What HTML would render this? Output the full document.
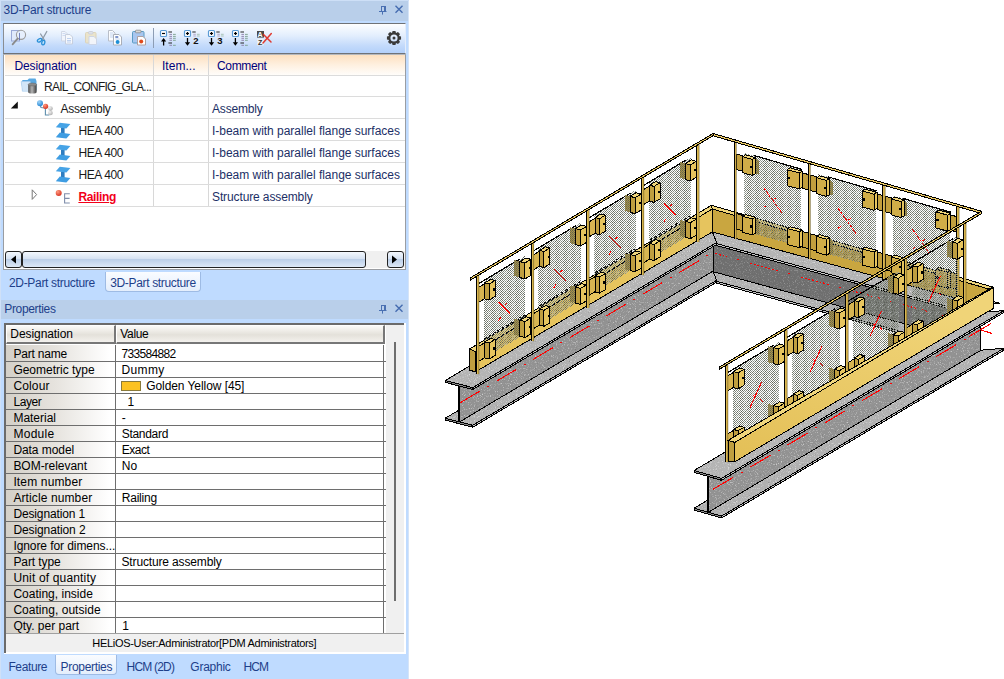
<!DOCTYPE html><html><head><meta charset="utf-8"><title>3D-Part structure</title><style>
*{box-sizing:border-box;margin:0;padding:0}
html,body{width:1004px;height:679px;overflow:hidden;background:#fff}
body{font-family:"Liberation Sans",Arial,sans-serif;font-size:12px;color:#000;position:relative}
.a{position:absolute}
.t{position:absolute;white-space:nowrap;line-height:16px;height:16px}
#left{position:absolute;left:0;top:0;width:409px;height:679px;background:#bfdbff}
.title{position:absolute;left:1px;width:407px;background:#b9cfea}
.nv{color:#00007b}
.bl{color:#1e3f8a}
.cm{color:#1c2f66}
.dk{color:#1a1a1a}
.hl{font-size:11px}
.rl{color:#f2001a;font-weight:bold;text-decoration:underline}
</style></head><body><div id="left"><div class="a" style="left:0;top:0;width:1px;height:679px;background:#cfe0f7"></div><div class="a" style="left:408px;top:0;width:1px;height:679px;background:#d5e4f8"></div><div class="title" style="top:0;height:21px"></div><div class="a" style="left:0;top:0;width:409px;height:1px;background:#cddff6"></div><span class="t bl" style="left:3.5px;top:2px;letter-spacing:-0.221px">3D-Part structure</span><div class="a" style="left:3px;top:23px;width:403px;height:31px;border:1px solid #6f7277;border-right-color:#e4edfb;border-left-color:#8a8d92;background:linear-gradient(#fdfeff 0%,#e3eefd 40%,#c3dafb 75%,#b3d0fa 100%)"></div><div class="a" style="left:153px;top:28px;width:1px;height:20px;background:#8d9db5"></div><svg class="a" style="left:0;top:0" width="409" height="54" viewBox="0 0 409 54"><rect x="11.5" y="30.5" width="8" height="10.5" fill="#dfe9fb" stroke="#9aa9d6" stroke-width="1"/><circle cx="21" cy="34.8" r="4.6" fill="#e6effc" fill-opacity="0.8" stroke="#9c9c9c" stroke-width="1.1"/><path d="M17.6 38.6L12.6 44.4" stroke="#8a8a8a" stroke-width="1.8" stroke-linecap="round"/><path d="M19.5 33v7" stroke="#5a6ab0" stroke-width="0.8"/><path d="M46.8 31.5L42 40 M40.6 34L44.6 40.5" stroke="#8e9aa6" stroke-width="1.3" stroke-linecap="round" fill="none"/><ellipse cx="39.6" cy="40.3" rx="2.4" ry="1.5" transform="rotate(-30 39.6 40.3)" fill="#bfe2fa" stroke="#2a8fd8" stroke-width="1.3"/><ellipse cx="43.3" cy="42.6" rx="1.5" ry="2.3" transform="rotate(15 43.3 42.6)" fill="#bfe2fa" stroke="#2a8fd8" stroke-width="1.3"/><path d="M61.5 31.5h3.5l2.5 2.5v7.0h-6z" fill="#f4f7fc" stroke="#cfd6e4" stroke-width="1" opacity="0.9"/><path d="M65.5 34.5h4.5l2.5 2.5v7.0h-7z" fill="#f8fafe" stroke="#c6cedd" stroke-width="1" opacity="0.95"/><path d="M67 38.5h4M67 40.5h4M67 42h4" stroke="#b9cdee" stroke-width="0.9"/><path d="M62.5 33.5h3M62.5 35.5h2.5" stroke="#c9d8f2" stroke-width="0.9"/><rect x="85.5" y="32.5" width="10.5" height="10.5" rx="1" fill="#ece3c6" stroke="#ddd2b4" opacity="0.9"/><rect x="88.5" y="31.5" width="4.5" height="2.5" rx="1" fill="#dfe3ea" stroke="#c8ccd6" stroke-width="0.8"/><path d="M89 36.5h5.0l2.5 2.5v5.5h-7.5z" fill="#f3f6fc" stroke="#cdd5e6" stroke-width="1" opacity="0.95"/><path d="M108.5 30.5h4.0l2.5 2.5v8.0h-6.5z" fill="#fbfcfe" stroke="#b9bec8" stroke-width="1" opacity="1"/><path d="M110 33h3.5M110 35h3.5M110 37h3" stroke="#bcd0ee" stroke-width="0.9"/><path d="M113.5 34.5h5.5l2.5 2.5v8.0h-8z" fill="#ffffff" stroke="#a9aeb8" stroke-width="1" opacity="1"/><path d="M115.3 37h3" stroke="#2b4fa8" stroke-width="1.2"/><path d="M115.3 39h4.5" stroke="#bcd0ee" stroke-width="0.9"/><circle cx="117.6" cy="42" r="2" fill="#1f8fd6"/><rect x="132.5" y="31.5" width="11.5" height="11.5" rx="1" fill="#a8c6ef" stroke="#5b9cc4"/><rect x="135.5" y="30.2" width="5.5" height="2.6" rx="0.8" fill="#d8d8d8" stroke="#8a8a8a" stroke-width="0.8"/><path d="M137.5 36.5h5.5l2.5 2.5v6.0h-8z" fill="#ffffff" stroke="#b0a0a0" stroke-width="1" opacity="1"/><circle cx="141.2" cy="41.6" r="2" fill="#e04a1c"/><rect x="160.5" y="30.5" width="6" height="6" rx="1" fill="#fff" stroke="#5b9bd5" stroke-width="1.2"/><path d="M162.0 33.5h3" stroke="#000" stroke-width="1.2"/><path d="M163.6 45.5v-6" stroke="#000" stroke-width="1.3"/><path d="M161.0 41.4L163.6 38l2.6 3.4z" fill="#000"/><path d="M168.4 32h3.6M168.4 43h3.6" stroke="#222" stroke-width="1"/><path d="M169.4 34.4h2.6" stroke="#8c7aa8" stroke-width="0.9"/><path d="M173.0 34.4h2.8" stroke="#7aa08c" stroke-width="0.9"/><path d="M169.4 36.4h2.6" stroke="#8c7aa8" stroke-width="0.9"/><path d="M173.0 36.4h2.8" stroke="#7aa08c" stroke-width="0.9"/><path d="M169.4 38.3h2.6" stroke="#8c7aa8" stroke-width="0.9"/><path d="M173.0 38.3h2.8" stroke="#7aa08c" stroke-width="0.9"/><path d="M169.4 40.3h2.6" stroke="#8c7aa8" stroke-width="0.9"/><path d="M173.0 40.3h2.8" stroke="#7aa08c" stroke-width="0.9"/><path d="M169.4 45.3h2.6" stroke="#8c7aa8" stroke-width="0.9"/><path d="M173.0 45.3h2.8" stroke="#7aa08c" stroke-width="0.9"/><rect x="184.5" y="30.5" width="6" height="6" rx="1" fill="#fff" stroke="#5b9bd5" stroke-width="1.2"/><path d="M186.0 33.5h3" stroke="#000" stroke-width="1.2"/><path d="M187.5 32v3" stroke="#000" stroke-width="1.2"/><path d="M187.5 38v6" stroke="#000" stroke-width="1.3"/><path d="M184.9 42.2L187.5 45.8l2.6 -3.6z" fill="#000"/><path d="M192.3 32h3.4" stroke="#222" stroke-width="1"/><path d="M193.3 34.3h2.6" stroke="#b0a4c4" stroke-width="0.9"/><path d="M196.9 34.3h2.8" stroke="#a4c0b0" stroke-width="0.9"/><path d="M193.3 36h2.6" stroke="#b0a4c4" stroke-width="0.9"/><path d="M196.9 36h2.8" stroke="#a4c0b0" stroke-width="0.9"/><text x="193.2" y="44.3" font-family="Liberation Sans,Arial,sans-serif" font-weight="bold" font-size="9.5px" fill="#111">2</text><rect x="208.5" y="30.5" width="6" height="6" rx="1" fill="#fff" stroke="#5b9bd5" stroke-width="1.2"/><path d="M210.0 33.5h3" stroke="#000" stroke-width="1.2"/><path d="M211.5 32v3" stroke="#000" stroke-width="1.2"/><path d="M211.5 38v6" stroke="#000" stroke-width="1.3"/><path d="M208.9 42.2L211.5 45.8l2.6 -3.6z" fill="#000"/><path d="M216.3 32h3.4" stroke="#222" stroke-width="1"/><path d="M217.3 34.3h2.6" stroke="#b0a4c4" stroke-width="0.9"/><path d="M220.9 34.3h2.8" stroke="#a4c0b0" stroke-width="0.9"/><path d="M217.3 36h2.6" stroke="#b0a4c4" stroke-width="0.9"/><path d="M220.9 36h2.8" stroke="#a4c0b0" stroke-width="0.9"/><text x="217.2" y="44.3" font-family="Liberation Sans,Arial,sans-serif" font-weight="bold" font-size="9.5px" fill="#111">3</text><rect x="232.5" y="30.5" width="6" height="6" rx="1" fill="#fff" stroke="#5b9bd5" stroke-width="1.2"/><path d="M234.0 33.5h3" stroke="#000" stroke-width="1.2"/><path d="M235.5 32v3" stroke="#000" stroke-width="1.2"/><path d="M235.4 38v6" stroke="#000" stroke-width="1.3"/><path d="M232.8 42.2L235.4 45.8l2.6 -3.6z" fill="#000"/><path d="M240.4 32h3.6M240.4 43h3.6" stroke="#222" stroke-width="1"/><path d="M241.4 34.4h2.6" stroke="#8c7aa8" stroke-width="0.9"/><path d="M245.0 34.4h2.8" stroke="#7aa08c" stroke-width="0.9"/><path d="M241.4 36.4h2.6" stroke="#8c7aa8" stroke-width="0.9"/><path d="M245.0 36.4h2.8" stroke="#7aa08c" stroke-width="0.9"/><path d="M241.4 38.3h2.6" stroke="#8c7aa8" stroke-width="0.9"/><path d="M245.0 38.3h2.8" stroke="#7aa08c" stroke-width="0.9"/><path d="M241.4 40.3h2.6" stroke="#8c7aa8" stroke-width="0.9"/><path d="M245.0 40.3h2.8" stroke="#7aa08c" stroke-width="0.9"/><path d="M241.4 45.3h2.6" stroke="#8c7aa8" stroke-width="0.9"/><path d="M245.0 45.3h2.8" stroke="#7aa08c" stroke-width="0.9"/><rect x="257" y="31" width="7" height="6.6" fill="#4a4a4a"/><text x="257.6" y="37" font-family="Liberation Sans,Arial,sans-serif" font-weight="bold" font-size="7px" fill="#fff">A</text><rect x="257.3" y="39.3" width="6.4" height="6" fill="#f4f4f4"/><text x="258" y="45" font-family="Liberation Sans,Arial,sans-serif" font-weight="bold" font-size="7px" fill="#333">Z</text><path d="M263.5 34.5L271 42 M271.3 33.6L263 43" stroke="#e0281c" stroke-width="1.5" stroke-linecap="round" opacity="0.9"/><path d="M401.06 36.57L401.06 39.43L398.90 40.01L398.89 40.04L400.00 41.98L397.98 44.00L396.04 42.89L396.01 42.90L395.43 45.06L392.57 45.06L391.99 42.90L391.96 42.89L390.02 44.00L388.00 41.98L389.11 40.04L389.10 40.01L386.94 39.43L386.94 36.57L389.10 35.99L389.11 35.96L388.00 34.02L390.02 32.00L391.96 33.11L391.99 33.10L392.57 30.94L395.43 30.94L396.01 33.10L396.04 33.11L397.98 32.00L400.00 34.02L398.89 35.96L398.90 35.99z M397.6 38a3.6 3.6 0 1 0 -7.2 0a3.6 3.6 0 1 0 7.2 0z" fill="#3a3a3a" fill-rule="evenodd"/><circle cx="394" cy="38" r="1.5" fill="#3a3a3a"/></svg><div class="a" style="left:3px;top:54px;width:403px;height:216px;background:#fff;border:1px solid #9a9da2;border-top-color:#b5b8bd"></div><div class="a" style="left:5px;top:55px;width:400px;height:20px;background:linear-gradient(#fde0c0 0%,#fef0e0 50%,#fffdfa 100%)"></div><div class="a" style="left:153px;top:55px;width:1px;height:152px;background:#d8d8d8"></div><div class="a" style="left:208px;top:55px;width:1px;height:152px;background:#d8d8d8"></div><div class="a" style="left:5px;top:75px;width:400px;height:1px;background:#dcdcdc"></div><div class="a" style="left:5px;top:96px;width:400px;height:1px;background:#dcdcdc"></div><div class="a" style="left:5px;top:118px;width:400px;height:1px;background:#dcdcdc"></div><div class="a" style="left:5px;top:140px;width:400px;height:1px;background:#dcdcdc"></div><div class="a" style="left:5px;top:162px;width:400px;height:1px;background:#dcdcdc"></div><div class="a" style="left:5px;top:184px;width:400px;height:1px;background:#dcdcdc"></div><div class="a" style="left:5px;top:206px;width:400px;height:1px;background:#dcdcdc"></div><span class="t nv" style="left:14.5px;top:58px;letter-spacing:-0.116px">Designation</span><span class="t nv" style="left:162px;top:58px;letter-spacing:0.037px">Item...</span><span class="t nv" style="left:217px;top:58px;letter-spacing:-0.345px">Comment</span><span class="t dk" style="left:44px;top:79px;letter-spacing:-0.756px">RAIL_CONFIG_GLA...</span><span class="t dk" style="left:60.4px;top:101px;letter-spacing:-0.227px">Assembly</span><span class="t cm" style="left:212px;top:101px;letter-spacing:-0.177px">Assembly</span><span class="t dk" style="left:78.4px;top:123px;letter-spacing:-0.382px">HEA 400</span><span class="t cm" style="left:212px;top:123px;letter-spacing:-0.024px">I-beam with parallel flange surfaces</span><span class="t dk" style="left:78.4px;top:145px;letter-spacing:-0.382px">HEA 400</span><span class="t cm" style="left:212px;top:145px;letter-spacing:-0.024px">I-beam with parallel flange surfaces</span><span class="t dk" style="left:78.4px;top:167px;letter-spacing:-0.382px">HEA 400</span><span class="t cm" style="left:212px;top:167px;letter-spacing:-0.024px">I-beam with parallel flange surfaces</span><span class="t rl" style="left:78.4px;top:189px;letter-spacing:-0.331px">Railing</span><span class="t cm" style="left:212px;top:189px;letter-spacing:-0.117px">Structure assembly</span><svg class="a" style="left:0;top:0" width="160" height="215" viewBox="0 0 160 215"><defs><linearGradient id="cyl" x1="0" x2="1"><stop offset="0" stop-color="#4a4a4a"/><stop offset="0.45" stop-color="#b4b4b4"/><stop offset="1" stop-color="#3c3c3c"/></linearGradient><radialGradient id="bb" cx="0.35" cy="0.3" r="0.8"><stop offset="0" stop-color="#9fd4f8"/><stop offset="1" stop-color="#1a7fd0"/></radialGradient><radialGradient id="rb" cx="0.35" cy="0.3" r="0.8"><stop offset="0" stop-color="#ff9a80"/><stop offset="1" stop-color="#d42a18"/></radialGradient><radialGradient id="gb" cx="0.35" cy="0.3" r="0.8"><stop offset="0" stop-color="#f0f0f0"/><stop offset="1" stop-color="#a8a8a8"/></radialGradient></defs><path d="M21.5 82.5l1-2.5h5l1.5-1.5h6.5l1 2.5v9.5h-14z" fill="#5aa9e2"/><path d="M21.2 81.5h9l1 9.8h-8.8z" fill="#d3e6f8" stroke="#a9cdee" stroke-width="0.6"/><path d="M28.2 84.5v7.4a4.2 1.5 0 0 0 8.4 0v-7.4z" fill="url(#cyl)"/><ellipse cx="32.4" cy="84.5" rx="4.2" ry="1.5" fill="#8c8c8c" stroke="#555" stroke-width="0.4"/><path d="M10.8 108.4h7v-6.8z" fill="#111"/><path d="M40 104.5l1 3 4 0.5M45.4 107v8h4" stroke="#5f8fae" stroke-width="1.1" fill="none"/><circle cx="50.5" cy="108.6" r="2.3" fill="url(#gb)"/><circle cx="50.5" cy="113" r="2.3" fill="url(#gb)"/><circle cx="40" cy="103.2" r="3" fill="url(#bb)"/><circle cx="45.6" cy="106.3" r="2.6" fill="url(#rb)"/><path d="M61 127.6h3.6v7.5h-3.6z" fill="#2e7dc0"/><path d="M55.8 137.2l4-4.6l10.6 1.3l-4 4.6z" fill="#3f9de2"/><path d="M55.8 127.3l4-4.6l10.6 1.3l-4 4.6z" fill="#46a3e6"/><path d="M61 149.6h3.6v7.5h-3.6z" fill="#2e7dc0"/><path d="M55.8 159.2l4-4.6l10.6 1.3l-4 4.6z" fill="#3f9de2"/><path d="M55.8 149.3l4-4.6l10.6 1.3l-4 4.6z" fill="#46a3e6"/><path d="M61 171.6h3.6v7.5h-3.6z" fill="#2e7dc0"/><path d="M55.8 181.2l4-4.6l10.6 1.3l-4 4.6z" fill="#3f9de2"/><path d="M55.8 171.3l4-4.6l10.6 1.3l-4 4.6z" fill="#46a3e6"/><circle cx="58.7" cy="193" r="3" fill="url(#rb)"/><path d="M69.8 193.8h-5.2v9.2h5.2M64.6 198.4h5" stroke="#7f8eab" stroke-width="1.1" fill="none"/><path d="M32.2 189.8v9.6l4.4-4.8z" fill="none" stroke="#777" stroke-width="1"/></svg><div class="a" style="left:5px;top:251px;width:400px;height:17px;background:#f0f0f0"></div><div class="a" style="left:5px;top:251px;width:17px;height:17px;border:1px solid #222;border-radius:3px;background:linear-gradient(#f4f8fd,#d6e2f2 45%,#bccfe8 50%,#dde8f6)"></div><div class="a" style="left:22px;top:251px;width:344px;height:17px;border:1px solid #222;border-radius:3px;background:linear-gradient(#f4f8fd,#d6e2f2 45%,#bccfe8 50%,#dde8f6)"></div><div class="a" style="left:387px;top:251px;width:17px;height:17px;border:1px solid #222;border-radius:3px;background:linear-gradient(#f4f8fd,#d6e2f2 45%,#bccfe8 50%,#dde8f6)"></div><svg class="a" style="left:0;top:0" width="409" height="300"><path d="M11 259.5l5-4v8z M397 259.5l-5-4v8z" fill="#000"/></svg><div class="a" style="left:105px;top:272px;width:96px;height:20px;background:linear-gradient(#fafcff,#e4eefc);border:1px solid #9ebbe4;border-top:none;border-radius:0 0 4px 4px"></div><span class="t bl" style="left:9px;top:275px;letter-spacing:-0.321px">2D-Part structure</span><span class="t bl" style="left:110.2px;top:275px;letter-spacing:-0.339px">3D-Part structure</span><div class="title" style="top:300px;height:19px"></div><span class="t bl" style="left:4.3px;top:301px;letter-spacing:-0.340px">Properties</span><svg class="a" style="left:376px;top:3px" width="30" height="14" viewBox="0 0 30 14"><path d="M5 3.5h5M5.5 3.5v5M3 8.5h7.5M6.5 9v2.6" stroke="#4a70b2" stroke-width="1" fill="none"/><rect x="8" y="3" width="2" height="5.5" fill="#4a70b2"/><path d="M19.5 2.8l7 7M26.5 2.8l-7 7" stroke="#456cb0" stroke-width="1.4" fill="none"/></svg><svg class="a" style="left:376px;top:302px" width="30" height="14" viewBox="0 0 30 14"><path d="M5 3.5h5M5.5 3.5v5M3 8.5h7.5M6.5 9v2.6" stroke="#4a70b2" stroke-width="1" fill="none"/><rect x="8" y="3" width="2" height="5.5" fill="#4a70b2"/><path d="M19.5 2.8l7 7M26.5 2.8l-7 7" stroke="#456cb0" stroke-width="1.4" fill="none"/></svg><div class="a" style="left:4px;top:323px;width:402px;height:331px;background:#fff"></div><div class="a" style="left:4px;top:323px;width:400px;height:2px;background:#6b6b6b"></div><div class="a" style="left:4px;top:323px;width:2px;height:330px;background:#6b6b6b"></div><div class="a" style="left:386px;top:325px;width:18px;height:309px;background:#f0f0f0"></div><div class="a" style="left:394px;top:342px;width:2px;height:259px;background:#6e6e6e"></div><div class="a" style="left:6px;top:325px;width:110px;height:19px;background:linear-gradient(#fbfaf8 0%,#e4e1da 55%,#f3f1ed 100%);border-top:1px solid #fff;border-left:1px solid #fff;border-right:2px solid #777;border-bottom:2px solid #777"></div><div class="a" style="left:116px;top:325px;width:269px;height:19px;background:linear-gradient(#fbfaf8 0%,#e4e1da 55%,#f3f1ed 100%);border-top:1px solid #fff;border-left:1px solid #fff;border-right:2px solid #777;border-bottom:2px solid #777"></div><span class="t " style="left:10.3px;top:326px;letter-spacing:-0.070px">Designation</span><span class="t " style="left:120.3px;top:326px;letter-spacing:-0.342px">Value</span><div class="a" style="left:6px;top:345px;width:109px;height:288px;background:linear-gradient(90deg,#d4d0c8 0%,#e6e3de 45%,#fff 95%)"></div><div class="a" style="left:115px;top:345px;width:1px;height:288px;background:#6e6e6e"></div><div class="a" style="left:383px;top:345px;width:1px;height:288px;background:#6e6e6e"></div><div class="a" style="left:6px;top:361px;width:380px;height:1px;background:#6e6e6e"></div><span class="t " style="left:13.4px;top:346px;letter-spacing:-0.184px">Part name</span><span class="t " style="left:121.5px;top:346px;letter-spacing:-0.686px">733584882</span><div class="a" style="left:6px;top:377px;width:380px;height:1px;background:#6e6e6e"></div><span class="t " style="left:13.4px;top:362px;letter-spacing:-0.013px">Geometric type</span><span class="t " style="left:121.5px;top:362px;letter-spacing:0.351px">Dummy</span><div class="a" style="left:6px;top:393px;width:380px;height:1px;background:#6e6e6e"></div><span class="t " style="left:13.4px;top:378px;letter-spacing:0.140px">Colour</span><span class="t " style="left:146.2px;top:378px;letter-spacing:-0.068px">Golden Yellow [45]</span><div class="a" style="left:6px;top:409px;width:380px;height:1px;background:#6e6e6e"></div><span class="t " style="left:13.4px;top:394px;letter-spacing:-0.426px">Layer</span><span class="t " style="left:127.6px;top:394px;letter-spacing:-2.088px">1</span><div class="a" style="left:6px;top:425px;width:380px;height:1px;background:#6e6e6e"></div><span class="t " style="left:13.4px;top:410px;letter-spacing:-0.011px">Material</span><span class="t " style="left:121.7px;top:410px;letter-spacing:0.200px">-</span><div class="a" style="left:6px;top:441px;width:380px;height:1px;background:#6e6e6e"></div><span class="t " style="left:13.4px;top:426px;letter-spacing:0.290px">Module</span><span class="t " style="left:121.7px;top:426px;letter-spacing:-0.288px">Standard</span><div class="a" style="left:6px;top:457px;width:380px;height:1px;background:#6e6e6e"></div><span class="t " style="left:13.4px;top:442px;letter-spacing:-0.067px">Data model</span><span class="t " style="left:121.7px;top:442px;letter-spacing:-0.443px">Exact</span><div class="a" style="left:6px;top:473px;width:380px;height:1px;background:#6e6e6e"></div><span class="t " style="left:13.4px;top:458px;letter-spacing:-0.028px">BOM-relevant</span><span class="t " style="left:121.7px;top:458px;letter-spacing:0.028px">No</span><div class="a" style="left:6px;top:489px;width:380px;height:1px;background:#6e6e6e"></div><span class="t " style="left:13.4px;top:474px;letter-spacing:0.149px">Item number</span><div class="a" style="left:6px;top:505px;width:380px;height:1px;background:#6e6e6e"></div><span class="t " style="left:13.4px;top:490px;letter-spacing:0.109px">Article number</span><span class="t " style="left:121.7px;top:490px;letter-spacing:-0.198px">Railing</span><div class="a" style="left:6px;top:521px;width:380px;height:1px;background:#6e6e6e"></div><span class="t " style="left:13.4px;top:506px;letter-spacing:-0.138px">Designation 1</span><div class="a" style="left:6px;top:537px;width:380px;height:1px;background:#6e6e6e"></div><span class="t " style="left:13.4px;top:522px;letter-spacing:-0.099px">Designation 2</span><div class="a" style="left:6px;top:553px;width:380px;height:1px;background:#6e6e6e"></div><span class="t " style="left:13.4px;top:538px;letter-spacing:-0.075px">Ignore for dimens...</span><div class="a" style="left:6px;top:569px;width:380px;height:1px;background:#6e6e6e"></div><span class="t " style="left:13.4px;top:554px;letter-spacing:-0.092px">Part type</span><span class="t " style="left:121.5px;top:554px;letter-spacing:-0.145px">Structure assembly</span><div class="a" style="left:6px;top:585px;width:380px;height:1px;background:#6e6e6e"></div><span class="t " style="left:13.4px;top:570px;letter-spacing:0.166px">Unit of quantity</span><div class="a" style="left:6px;top:601px;width:380px;height:1px;background:#6e6e6e"></div><span class="t " style="left:13.4px;top:586px;letter-spacing:0.007px">Coating, inside</span><div class="a" style="left:6px;top:617px;width:380px;height:1px;background:#6e6e6e"></div><span class="t " style="left:13.4px;top:602px;letter-spacing:0.029px">Coating, outside</span><span class="t " style="left:13.4px;top:618px;letter-spacing:-0.001px">Qty. per part</span><span class="t " style="left:122.3px;top:618px;letter-spacing:-2.088px">1</span><div class="a" style="left:121px;top:381px;width:20px;height:10px;background:#fcc221;border:1px solid #8a7a3a"></div><div class="a" style="left:6px;top:633px;width:398px;height:19px;background:#f0f0f0;border-top:1px solid #a0a0a0"></div><span class="t hl" style="left:92.3px;top:635px;letter-spacing:-0.306px">HELiOS-User:Administrator[PDM Administrators]</span><div class="a" style="left:55px;top:655px;width:62px;height:20px;background:linear-gradient(#fafcff,#e4eefc);border:1px solid #9ebbe4;border-top:none;border-radius:0 0 4px 4px"></div><span class="t bl" style="left:8.4px;top:659px;letter-spacing:-0.380px">Feature</span><span class="t bl" style="left:60.6px;top:659px;letter-spacing:-0.320px">Properties</span><span class="t bl" style="left:126.6px;top:659px;letter-spacing:-0.812px">HCM (2D)</span><span class="t bl" style="left:190.3px;top:659px;letter-spacing:-0.247px">Graphic</span><span class="t bl" style="left:243.4px;top:659px;letter-spacing:-0.809px">HCM</span></div><svg class="a" style="left:0;top:0" width="1004" height="679" viewBox="0 0 1004 679" shape-rendering="crispEdges"><defs><filter id="nz" x="0" y="0" width="100%" height="100%" color-interpolation-filters="sRGB"><feTurbulence type="fractalNoise" baseFrequency="0.85" numOctaves="2" seed="7" stitchTiles="stitch" result="n"/><feColorMatrix in="n" type="matrix" values="0 0 0 0 1  0 0 0 0 1  0 0 0 0 1  3.2 0 0 0 -1.75" result="wh"/><feColorMatrix in="n" type="matrix" values="0 0 0 0 0.2  0 0 0 0 0.2  0 0 0 0 0.2  0 -2.0 0 0 0.66" result="bk"/><feMerge><feMergeNode in="bk"/><feMergeNode in="wh"/></feMerge></filter><pattern id="np" width="160" height="160" patternUnits="userSpaceOnUse"><rect width="160" height="160" fill="#fff" filter="url(#nz)"/></pattern><pattern id="gl" width="8" height="8" patternUnits="userSpaceOnUse"><rect x="0" y="0" width="1" height="1" fill="#9ca298"/><rect x="2" y="0" width="1" height="1" fill="#a8aeaa"/><rect x="4" y="0" width="1" height="1" fill="#5e6458"/><rect x="6" y="0" width="1" height="1" fill="#868c82"/><rect x="1" y="1" width="1" height="1" fill="#8c9288"/><rect x="3" y="1" width="1" height="1" fill="#5e6458"/><rect x="5" y="1" width="1" height="1" fill="#7c8278"/><rect x="7" y="1" width="1" height="1" fill="#6c7266"/><rect x="0" y="2" width="1" height="1" fill="#a8aeaa"/><rect x="2" y="2" width="1" height="1" fill="#868c82"/><rect x="4" y="2" width="1" height="1" fill="#8c9288"/><rect x="6" y="2" width="1" height="1" fill="#747a6e"/><rect x="1" y="3" width="1" height="1" fill="#6c7266"/><rect x="3" y="3" width="1" height="1" fill="#8c9288"/><rect x="5" y="3" width="1" height="1" fill="#5e6458"/><rect x="7" y="3" width="1" height="1" fill="#8c9288"/><rect x="0" y="4" width="1" height="1" fill="#747a6e"/><rect x="2" y="4" width="1" height="1" fill="#9ca298"/><rect x="4" y="4" width="1" height="1" fill="#7c8278"/><rect x="6" y="4" width="1" height="1" fill="#747a6e"/><rect x="1" y="5" width="1" height="1" fill="#7c8278"/><rect x="3" y="5" width="1" height="1" fill="#6c7266"/><rect x="5" y="5" width="1" height="1" fill="#7c8278"/><rect x="7" y="5" width="1" height="1" fill="#868c82"/><rect x="0" y="6" width="1" height="1" fill="#7c8278"/><rect x="2" y="6" width="1" height="1" fill="#7c8278"/><rect x="4" y="6" width="1" height="1" fill="#5e6458"/><rect x="6" y="6" width="1" height="1" fill="#5e6458"/><rect x="1" y="7" width="1" height="1" fill="#8c9288"/><rect x="3" y="7" width="1" height="1" fill="#8c9288"/><rect x="5" y="7" width="1" height="1" fill="#7c8278"/><rect x="7" y="7" width="1" height="1" fill="#7c8278"/></pattern><pattern id="gy" width="2" height="2" patternUnits="userSpaceOnUse"><rect width="2" height="2" fill="#b4963e"/><rect x="0" y="0" width="1" height="1" fill="#5e6454"/><rect x="1" y="1" width="1" height="1" fill="#6a7060"/></pattern><linearGradient id="ty" x1="0" y1="1" x2="0.3" y2="0"><stop offset="0" stop-color="#e3bf56"/><stop offset="1" stop-color="#f0d478"/></linearGradient></defs><clipPath id="cv"><rect x="409" y="0" width="595" height="679"/></clipPath><g clip-path="url(#cv)" stroke-linejoin="round"><g id="beams"><polygon points="716.6,281.3 712.9,271.6 976.3,343.3 952.6,345.5" fill="#b0b0b0" stroke="none"/><polygon points="716.6,281.3 712.9,271.6 976.3,343.3 952.6,345.5" fill="url(#np)" stroke="none" opacity="0.6"/><polygon points="716.6,281.3 712.9,271.6 976.3,343.3 952.6,345.5" fill="none" stroke="#000" stroke-width="1"/><polygon points="716.6,283.2 952.6,347.4 952.6,345.5 716.6,281.3" fill="#c4c4c4" stroke="none"/><polygon points="716.6,283.2 952.6,347.4 952.6,345.5 716.6,281.3" fill="none" stroke="#000" stroke-width="1"/><polygon points="712.9,271.6 976.3,343.3 976.3,307.5 712.9,235.8" fill="#6f6f6f" stroke="none"/><polygon points="712.9,271.6 976.3,343.3 976.3,307.5 712.9,235.8" fill="url(#np)" stroke="none" opacity="0.35"/><polygon points="712.9,271.6 976.3,343.3 976.3,307.5 712.9,235.8" fill="none" stroke="#000" stroke-width="1"/><polygon points="716.6,243.6 709.2,224.3 1000,303.4 952.6,307.8" fill="#b4b4b4" stroke="none"/><polygon points="716.6,243.6 709.2,224.3 1000,303.4 952.6,307.8" fill="url(#np)" stroke="none" opacity="0.6"/><polygon points="716.6,243.6 709.2,224.3 1000,303.4 952.6,307.8" fill="none" stroke="#000" stroke-width="1"/><polygon points="716.6,245.5 952.6,309.7 952.6,307.8 716.6,243.6" fill="#c4c4c4" stroke="none"/><polygon points="716.6,245.5 952.6,309.7 952.6,307.8 716.6,243.6" fill="none" stroke="#000" stroke-width="1"/><polygon points="445.3,418.2 709.2,261.3 716.6,280.3 472.7,425.3" fill="#b0b0b0" stroke="none"/><polygon points="445.3,418.2 709.2,261.3 716.6,280.3 472.7,425.3" fill="url(#np)" stroke="none" opacity="0.6"/><polygon points="445.3,418.2 709.2,261.3 716.6,280.3 472.7,425.3" fill="none" stroke="#000" stroke-width="1"/><polygon points="472.7,427.2 716.6,282.2 716.6,280.3 472.7,425.3" fill="#c4c4c4" stroke="none"/><polygon points="472.7,427.2 716.6,282.2 716.6,280.3 472.7,425.3" fill="none" stroke="#000" stroke-width="1"/><polygon points="445.3,420.1 472.7,427.2 472.7,425.3 445.3,418.2" fill="#8a8a8a" stroke="none"/><polygon points="445.3,420.1 472.7,427.2 472.7,425.3 445.3,418.2" fill="none" stroke="#000" stroke-width="1"/><polygon points="459.5,421.9 713.4,270.9 713.4,235.1 459.5,386.1" fill="#929292" stroke="none"/><polygon points="459.5,421.9 713.4,270.9 713.4,235.1 459.5,386.1" fill="url(#np)" stroke="none" opacity="0.55"/><polygon points="459.5,421.9 713.4,270.9 713.4,235.1 459.5,386.1" fill="none" stroke="#000" stroke-width="1"/><polygon points="458.3,421.6 459.5,421.9 459.5,386.1 458.3,385.8" fill="#000" stroke="none"/><polygon points="458.3,421.6 459.5,421.9 459.5,386.1 458.3,385.8" fill="none" stroke="#000" stroke-width="1"/><polygon points="445.3,380.5 709.2,223.6 716.6,242.6 472.7,387.6" fill="#b4b4b4" stroke="none"/><polygon points="445.3,380.5 709.2,223.6 716.6,242.6 472.7,387.6" fill="url(#np)" stroke="none" opacity="0.6"/><polygon points="445.3,380.5 709.2,223.6 716.6,242.6 472.7,387.6" fill="none" stroke="#000" stroke-width="1"/><polygon points="472.7,389.5 716.6,244.5 716.6,242.6 472.7,387.6" fill="#c4c4c4" stroke="none"/><polygon points="472.7,389.5 716.6,244.5 716.6,242.6 472.7,387.6" fill="none" stroke="#000" stroke-width="1"/><polygon points="445.3,382.4 472.7,389.5 472.7,387.6 445.3,380.5" fill="#8a8a8a" stroke="none"/><polygon points="445.3,382.4 472.7,389.5 472.7,387.6 445.3,380.5" fill="none" stroke="#000" stroke-width="1"/><polyline points="460.3,402.7 479.8,391.1" fill="none" stroke="#f00" stroke-width="1.1" /><rect x="487" y="386" width="2" height="1" fill="#f00"/><polyline points="496.8,381 516.3,369.4" fill="none" stroke="#f00" stroke-width="1.1" /><rect x="524" y="364" width="2" height="1" fill="#f00"/><polyline points="533.3,359.3 552.8,347.7" fill="none" stroke="#f00" stroke-width="1.1" /><rect x="560" y="342" width="2" height="1" fill="#f00"/><polyline points="569.8,337.6 589.3,326" fill="none" stroke="#f00" stroke-width="1.1" /><rect x="597" y="320" width="2" height="1" fill="#f00"/><polyline points="606.3,315.9 625.8,304.3" fill="none" stroke="#f00" stroke-width="1.1" /><rect x="633" y="299" width="2" height="1" fill="#f00"/><polyline points="642.8,294.2 662.3,282.6" fill="none" stroke="#f00" stroke-width="1.1" /><rect x="670" y="277" width="2" height="1" fill="#f00"/><polyline points="679.3,272.5 698.8,260.9" fill="none" stroke="#f00" stroke-width="1.1" /><rect x="706" y="255" width="2" height="1" fill="#f00"/><polyline points="715.3,253.6 726.7,256.7" fill="none" stroke="#f00" stroke-width="1.1" stroke-dasharray="2 1.8"/><rect x="737" y="259" width="2" height="1" fill="#f00"/><polyline points="750.2,263.1 777.7,270.6" fill="none" stroke="#f00" stroke-width="1.1" stroke-dasharray="2 1.8"/><rect x="788" y="273" width="2" height="1" fill="#f00"/><polyline points="801.2,277 828.7,284.4" fill="none" stroke="#f00" stroke-width="1.1" stroke-dasharray="2 1.8"/><rect x="839" y="287" width="2" height="1" fill="#f00"/><polyline points="852.2,290.8 879.7,298.3" fill="none" stroke="#f00" stroke-width="1.1" stroke-dasharray="2 1.8"/><rect x="890" y="301" width="2" height="1" fill="#f00"/><polyline points="903.2,304.7 930.7,312.2" fill="none" stroke="#f00" stroke-width="1.1" stroke-dasharray="2 1.8"/><rect x="941" y="315" width="2" height="1" fill="#f00"/><polyline points="954.2,318.6 960,320.2" fill="none" stroke="#f00" stroke-width="1.1" stroke-dasharray="2 1.8"/></g><g id="rails"><polygon points="712.3,209 988.8,289 988.8,307.1 712.3,231.9" fill="#c9a640" stroke="#000" stroke-width="1" /><polygon points="711.5,205.3 993.4,287.2 988.8,289 712.3,209" fill="#f0d67c" stroke="#000" stroke-width="1" /><polygon points="744.2,231.2 801.2,246.8 801.2,169.1 744.2,152.7" fill="url(#gl)" stroke="none"/><polyline points="754.2,155.6 802.2,169.4" fill="none" stroke="#000" stroke-width="1.2" /><polyline points="763.8,187.7 781.5,212.6" fill="none" stroke="#f00" stroke-width="1" stroke-dasharray="3 1"/><polyline points="773.4,199.1 776.4,197.9" fill="none" stroke="#f00" stroke-width="1" /><polyline points="763.8,207.4 766.2,205.7" fill="none" stroke="#f00" stroke-width="1" /><polygon points="818.2,251.4 876,267.2 876,190.6 818.2,174" fill="url(#gl)" stroke="none"/><polyline points="828.2,176.9 877,190.9" fill="none" stroke="#000" stroke-width="1.2" /><polyline points="838.2,208.5 855.9,233.4" fill="none" stroke="#f00" stroke-width="1" stroke-dasharray="3 1"/><polyline points="847.8,219.9 850.8,218.7" fill="none" stroke="#f00" stroke-width="1" /><polyline points="838.2,228.2 840.6,226.5" fill="none" stroke="#f00" stroke-width="1" /><polygon points="893,271.9 949.9,287.4 949.9,211.9 893,195.5" fill="url(#gl)" stroke="none"/><polyline points="903,198.4 950.9,212.2" fill="none" stroke="#000" stroke-width="1.2" /><polyline points="912.6,229.4 930.2,254.3" fill="none" stroke="#f00" stroke-width="1" stroke-dasharray="3 1"/><polyline points="922.2,240.8 925.2,239.6" fill="none" stroke="#f00" stroke-width="1" /><polyline points="912.6,249.1 915,247.4" fill="none" stroke="#f00" stroke-width="1" /><polygon points="736.4,229.1 742.5,230.8 742.5,215.3 736.4,213.6" fill="#c29f3e" stroke="#000" stroke-width="1" /><polygon points="755.5,233.2 758.5,234 758.5,221 755.5,217.2" fill="url(#gy)" stroke="none" stroke-width="1" /><polygon points="742.5,232.3 752.5,235 752.5,219 742.5,216.3" fill="#d0ad48" stroke="#000" stroke-width="1" /><polygon points="752.5,235 755.5,233.2 755.5,217.2 752.5,219" fill="#e6c45e" stroke="#000" stroke-width="1" /><polygon points="752.5,219 755.5,217.2 745.5,214.5 742.5,216.3" fill="#f0d67c" stroke="#000" stroke-width="1" /><rect x="749.8" y="225.4" width="2.4" height="2.2" fill="#000"/><polygon points="736.4,169.5 742.5,171.2 742.5,155.7 736.4,154" fill="#c29f3e" stroke="#000" stroke-width="1" /><polygon points="755.5,173.6 758.5,174.4 758.5,161.4 755.5,157.6" fill="url(#gy)" stroke="none" stroke-width="1" /><polygon points="742.5,172.7 752.5,175.4 752.5,159.4 742.5,156.7" fill="#d0ad48" stroke="#000" stroke-width="1" /><polygon points="752.5,175.4 755.5,173.6 755.5,157.6 752.5,159.4" fill="#e6c45e" stroke="#000" stroke-width="1" /><polygon points="752.5,159.4 755.5,157.6 745.5,154.9 742.5,156.7" fill="#f0d67c" stroke="#000" stroke-width="1" /><rect x="749.8" y="165.9" width="2.4" height="2.2" fill="#000"/><rect x="734" y="140.9" width="2.4" height="98.3" fill="#d9b650"/><polyline points="734,140.9 734,239.2" fill="none" stroke="#000" stroke-width="1" /><polyline points="736.4,140.9 736.4,239.2" fill="none" stroke="#6b5a20" stroke-width="0.6" /><polygon points="810.4,249.3 816.5,250.9 816.5,235.4 810.4,233.8" fill="#c29f3e" stroke="#000" stroke-width="1" /><polygon points="829.5,253.4 832.5,254.2 832.5,241.2 829.5,237.4" fill="url(#gy)" stroke="none" stroke-width="1" /><polygon points="816.5,252.4 826.5,255.2 826.5,239.2 816.5,236.4" fill="#d0ad48" stroke="#000" stroke-width="1" /><polygon points="826.5,255.2 829.5,253.4 829.5,237.4 826.5,239.2" fill="#e6c45e" stroke="#000" stroke-width="1" /><polygon points="826.5,239.2 829.5,237.4 819.5,234.7 816.5,236.4" fill="#f0d67c" stroke="#000" stroke-width="1" /><rect x="823.8" y="245.6" width="2.4" height="2.2" fill="#000"/><polygon points="802.2,247.1 808,248.6 808,233.1 802.2,231.6" fill="#c29f3e" stroke="#000" stroke-width="1" /><polygon points="787.2,244.5 799.2,247.7 799.2,231.7 787.2,228.5" fill="#d0ad48" stroke="#000" stroke-width="1" /><polygon points="799.2,247.7 802.2,246 802.2,230 799.2,231.7" fill="#e6c45e" stroke="#000" stroke-width="1" /><polygon points="799.2,231.7 802.2,230 790.2,226.7 787.2,228.5" fill="#f0d67c" stroke="#000" stroke-width="1" /><rect x="787.7" y="235.8" width="2.4" height="2.2" fill="#000"/><polygon points="810.4,190.5 816.5,192.2 816.5,176.7 810.4,175" fill="#c29f3e" stroke="#000" stroke-width="1" /><polygon points="829.5,194.6 832.5,195.4 832.5,182.4 829.5,178.6" fill="url(#gy)" stroke="none" stroke-width="1" /><polygon points="816.5,193.7 826.5,196.4 826.5,180.4 816.5,177.7" fill="#d0ad48" stroke="#000" stroke-width="1" /><polygon points="826.5,196.4 829.5,194.6 829.5,178.6 826.5,180.4" fill="#e6c45e" stroke="#000" stroke-width="1" /><polygon points="826.5,180.4 829.5,178.6 819.5,175.9 816.5,177.7" fill="#f0d67c" stroke="#000" stroke-width="1" /><rect x="823.8" y="186.9" width="2.4" height="2.2" fill="#000"/><polygon points="802.2,188.3 808,189.9 808,174.4 802.2,172.8" fill="#c29f3e" stroke="#000" stroke-width="1" /><polygon points="787.2,185.7 799.2,189 799.2,173 787.2,169.7" fill="#d0ad48" stroke="#000" stroke-width="1" /><polygon points="799.2,189 802.2,187.2 802.2,171.2 799.2,173" fill="#e6c45e" stroke="#000" stroke-width="1" /><polygon points="799.2,173 802.2,171.2 790.2,167.9 787.2,169.7" fill="#f0d67c" stroke="#000" stroke-width="1" /><rect x="787.7" y="177" width="2.4" height="2.2" fill="#000"/><rect x="808" y="162.3" width="2.4" height="96.9" fill="#d9b650"/><polyline points="808,162.3 808,259.3" fill="none" stroke="#000" stroke-width="1" /><polyline points="810.4,162.3 810.4,259.3" fill="none" stroke="#6b5a20" stroke-width="0.6" /><polygon points="885.2,269.7 891.3,271.4 891.3,255.9 885.2,254.2" fill="#c29f3e" stroke="#000" stroke-width="1" /><polygon points="904.3,273.8 907.3,274.6 907.3,261.6 904.3,257.8" fill="url(#gy)" stroke="none" stroke-width="1" /><polygon points="891.3,272.9 901.3,275.6 901.3,259.6 891.3,256.9" fill="#d0ad48" stroke="#000" stroke-width="1" /><polygon points="901.3,275.6 904.3,273.8 904.3,257.8 901.3,259.6" fill="#e6c45e" stroke="#000" stroke-width="1" /><polygon points="901.3,259.6 904.3,257.8 894.3,255.1 891.3,256.9" fill="#f0d67c" stroke="#000" stroke-width="1" /><rect x="898.6" y="266" width="2.4" height="2.2" fill="#000"/><polygon points="877,267.5 882.8,269 882.8,253.5 877,252" fill="#c29f3e" stroke="#000" stroke-width="1" /><polygon points="862,264.9 874,268.1 874,252.1 862,248.9" fill="#d0ad48" stroke="#000" stroke-width="1" /><polygon points="874,268.1 877,266.4 877,250.4 874,252.1" fill="#e6c45e" stroke="#000" stroke-width="1" /><polygon points="874,252.1 877,250.4 865,247.1 862,248.9" fill="#f0d67c" stroke="#000" stroke-width="1" /><rect x="862.5" y="256.2" width="2.4" height="2.2" fill="#000"/><polygon points="885.2,211.7 891.3,213.4 891.3,197.9 885.2,196.2" fill="#c29f3e" stroke="#000" stroke-width="1" /><polygon points="904.3,215.8 907.3,216.7 907.3,203.7 904.3,199.8" fill="url(#gy)" stroke="none" stroke-width="1" /><polygon points="891.3,214.9 901.3,217.6 901.3,201.6 891.3,198.9" fill="#d0ad48" stroke="#000" stroke-width="1" /><polygon points="901.3,217.6 904.3,215.8 904.3,199.8 901.3,201.6" fill="#e6c45e" stroke="#000" stroke-width="1" /><polygon points="901.3,201.6 904.3,199.8 894.3,197.1 891.3,198.9" fill="#f0d67c" stroke="#000" stroke-width="1" /><rect x="898.6" y="208.1" width="2.4" height="2.2" fill="#000"/><polygon points="877,209.5 882.8,211.1 882.8,195.6 877,194" fill="#c29f3e" stroke="#000" stroke-width="1" /><polygon points="862,206.9 874,210.2 874,194.2 862,190.9" fill="#d0ad48" stroke="#000" stroke-width="1" /><polygon points="874,210.2 877,208.4 877,192.4 874,194.2" fill="#e6c45e" stroke="#000" stroke-width="1" /><polygon points="874,194.2 877,192.4 865,189.2 862,190.9" fill="#f0d67c" stroke="#000" stroke-width="1" /><rect x="862.5" y="198.3" width="2.4" height="2.2" fill="#000"/><rect x="882.8" y="184" width="2.4" height="95.6" fill="#d9b650"/><polyline points="882.8,184 882.8,279.6" fill="none" stroke="#000" stroke-width="1" /><polyline points="885.2,184 885.2,279.6" fill="none" stroke="#6b5a20" stroke-width="0.6" /><polygon points="950.9,287.6 956.7,289.2 956.7,273.7 950.9,272.1" fill="#c29f3e" stroke="#000" stroke-width="1" /><polygon points="935.9,285 947.9,288.3 947.9,272.3 935.9,269" fill="#d0ad48" stroke="#000" stroke-width="1" /><polygon points="947.9,288.3 950.9,286.5 950.9,270.5 947.9,272.3" fill="#e6c45e" stroke="#000" stroke-width="1" /><polygon points="947.9,272.3 950.9,270.5 938.9,267.3 935.9,269" fill="#f0d67c" stroke="#000" stroke-width="1" /><rect x="936.4" y="276.4" width="2.4" height="2.2" fill="#000"/><polygon points="950.9,230.5 956.7,232.1 956.7,216.6 950.9,215" fill="#c29f3e" stroke="#000" stroke-width="1" /><polygon points="935.9,227.9 947.9,231.2 947.9,215.2 935.9,211.9" fill="#d0ad48" stroke="#000" stroke-width="1" /><polygon points="947.9,231.2 950.9,229.4 950.9,213.4 947.9,215.2" fill="#e6c45e" stroke="#000" stroke-width="1" /><polygon points="947.9,215.2 950.9,213.4 938.9,210.1 935.9,211.9" fill="#f0d67c" stroke="#000" stroke-width="1" /><rect x="936.4" y="219.2" width="2.4" height="2.2" fill="#000"/><rect x="956.7" y="205.4" width="2.4" height="94.2" fill="#d9b650"/><polyline points="956.7,205.4 956.7,299.6" fill="none" stroke="#000" stroke-width="1" /><polyline points="959.1,205.4 959.1,299.6" fill="none" stroke="#6b5a20" stroke-width="0.6" /><polygon points="713,133.5 981.5,211.2 981.5,213.5 713,135.8" fill="#e9c964" stroke="#000" stroke-width="1" /><polygon points="469.4,349 711.5,205.3 712.3,209 475.6,351.6" fill="#f0d67c" stroke="#000" stroke-width="1" /><polygon points="475.6,371.8 712.3,231.9 712.3,209 475.6,351.6" fill="#e6c45e" stroke="#000" stroke-width="1" /><polygon points="469.4,370.2 475.6,371.8 475.6,351.6 469.4,349" fill="#bf9e40" stroke="#000" stroke-width="1" /><polygon points="483.6,358.6 525.4,333.6 525.4,255.7 483.6,280.6" fill="url(#gl)" stroke="none"/><polyline points="478.8,283.5 520.4,258.7" fill="none" stroke="#000" stroke-width="1.2" /><polyline points="484.6,346.2 524.4,322.2" fill="none" stroke="#000" stroke-width="1" stroke-dasharray="3 2"/><polyline points="484.6,338.8 524.4,315" fill="none" stroke="#000" stroke-width="1" stroke-dasharray="3 2"/><polyline points="498.8,302.1 510.2,313.6" fill="none" stroke="#f00" stroke-width="1" /><polyline points="505.2,304.9 507.1,303" fill="none" stroke="#f00" stroke-width="1" /><polyline points="498.5,321.1 500.6,317.4" fill="none" stroke="#f00" stroke-width="1" /><polygon points="538.4,325.8 581,300.3 581,222.6 538.4,248" fill="url(#gl)" stroke="none"/><polyline points="533.6,250.8 576,225.6" fill="none" stroke="#000" stroke-width="1.2" /><polyline points="539.4,313.2 580,288.7" fill="none" stroke="#000" stroke-width="1" stroke-dasharray="3 2"/><polyline points="539.4,306 580,281.8" fill="none" stroke="#000" stroke-width="1" stroke-dasharray="3 2"/><polyline points="554,269.1 565.5,280.6" fill="none" stroke="#f00" stroke-width="1" /><polyline points="560.4,272 562.3,270.1" fill="none" stroke="#f00" stroke-width="1" /><polyline points="553.7,288.2 555.8,284.5" fill="none" stroke="#f00" stroke-width="1" /><polygon points="594,292.5 635.5,267.6 635.5,190.2 594,214.9" fill="url(#gl)" stroke="none"/><polyline points="589.2,217.7 630.5,193.2" fill="none" stroke="#000" stroke-width="1.2" /><polyline points="595,279.7 634.5,255.9" fill="none" stroke="#000" stroke-width="1" stroke-dasharray="3 2"/><polyline points="595,272.8 634.5,249.2" fill="none" stroke="#000" stroke-width="1" stroke-dasharray="3 2"/><polyline points="609,236.2 620.5,247.7" fill="none" stroke="#f00" stroke-width="1" /><polyline points="615.5,239.1 617.4,237.2" fill="none" stroke="#f00" stroke-width="1" /><polyline points="608.8,255.3 610.9,251.6" fill="none" stroke="#f00" stroke-width="1" /><polygon points="648.5,259.8 690.9,234.4 690.9,157.2 648.5,182.5" fill="url(#gl)" stroke="none"/><polyline points="643.7,185.3 685.9,160.2" fill="none" stroke="#000" stroke-width="1.2" /><polyline points="649.5,246.8 689.9,222.5" fill="none" stroke="#000" stroke-width="1" stroke-dasharray="3 2"/><polyline points="649.5,240.2 689.9,216.1" fill="none" stroke="#000" stroke-width="1" stroke-dasharray="3 2"/><polyline points="664,203.4 675.5,214.9" fill="none" stroke="#f00" stroke-width="1" /><polyline points="670.4,206.3 672.3,204.4" fill="none" stroke="#f00" stroke-width="1" /><polyline points="663.7,222.5 665.8,218.8" fill="none" stroke="#f00" stroke-width="1" /><polygon points="478.8,361.2 484.6,357.8 484.6,342.8 478.8,346.2" fill="#d8b552" stroke="#000" stroke-width="1" /><polygon points="484.6,357.9 489.1,359.1 489.1,343.1 484.6,341.9" fill="#bf9e40" stroke="#000" stroke-width="1" /><polygon points="489.1,359.1 495.1,355.5 495.1,339.5 489.1,343.1" fill="#e6c45e" stroke="#000" stroke-width="1" /><polygon points="489.1,343.1 495.1,339.5 490.6,338.3 484.6,341.9" fill="#f0d67c" stroke="#000" stroke-width="1" /><rect x="492.9" y="347.3" width="2.2" height="2.2" fill="#000"/><polygon points="478.8,302.2 484.6,298.8 484.6,283.8 478.8,287.2" fill="#d8b552" stroke="#000" stroke-width="1" /><polygon points="484.6,298.9 489.1,300.1 489.1,284.1 484.6,282.9" fill="#bf9e40" stroke="#000" stroke-width="1" /><polygon points="489.1,300.1 495.1,296.5 495.1,280.5 489.1,284.1" fill="#e6c45e" stroke="#000" stroke-width="1" /><polygon points="489.1,284.1 495.1,280.5 490.6,279.3 484.6,282.9" fill="#f0d67c" stroke="#000" stroke-width="1" /><rect x="492.9" y="288.3" width="2.2" height="2.2" fill="#000"/><rect x="476.4" y="274.5" width="2.4" height="99.8" fill="#d9b650"/><polyline points="476.4,274.5 476.4,374.3" fill="none" stroke="#000" stroke-width="1" /><polyline points="478.8,274.5 478.8,374.3" fill="none" stroke="#6b5a20" stroke-width="0.6" /><polygon points="533.6,328.5 539.4,325 539.4,310 533.6,313.5" fill="#d8b552" stroke="#000" stroke-width="1" /><polygon points="539.4,325.1 543.9,326.3 543.9,310.3 539.4,309.1" fill="#bf9e40" stroke="#000" stroke-width="1" /><polygon points="543.9,326.3 549.9,322.8 549.9,306.8 543.9,310.3" fill="#e6c45e" stroke="#000" stroke-width="1" /><polygon points="543.9,310.3 549.9,306.8 545.4,305.6 539.4,309.1" fill="#f0d67c" stroke="#000" stroke-width="1" /><rect x="547.7" y="314.5" width="2.2" height="2.2" fill="#000"/><polygon points="514.4,334.8 519.9,336.3 519.9,320.3 514.4,318.8" fill="url(#gy)" stroke="none" stroke-width="1" /><polygon points="519.9,336.3 524.9,337.6 524.9,321.6 519.9,320.3" fill="#bf9e40" stroke="#000" stroke-width="1" /><polygon points="524.9,337.6 530.9,334.1 530.9,318.1 524.9,321.6" fill="#e6c45e" stroke="#000" stroke-width="1" /><polygon points="524.9,321.6 530.9,318.1 525.9,316.7 519.9,320.3" fill="#f0d67c" stroke="#000" stroke-width="1" /><rect x="528.7" y="325.8" width="2.2" height="2.2" fill="#000"/><polygon points="533.6,269.8 539.4,266.3 539.4,251.3 533.6,254.8" fill="#d8b552" stroke="#000" stroke-width="1" /><polygon points="539.4,266.4 543.9,267.6 543.9,251.6 539.4,250.4" fill="#bf9e40" stroke="#000" stroke-width="1" /><polygon points="543.9,267.6 549.9,264.1 549.9,248.1 543.9,251.6" fill="#e6c45e" stroke="#000" stroke-width="1" /><polygon points="543.9,251.6 549.9,248.1 545.4,246.9 539.4,250.4" fill="#f0d67c" stroke="#000" stroke-width="1" /><rect x="547.7" y="255.8" width="2.2" height="2.2" fill="#000"/><polygon points="514.4,276.1 519.9,277.6 519.9,261.6 514.4,260.1" fill="url(#gy)" stroke="none" stroke-width="1" /><polygon points="519.9,277.6 524.9,278.9 524.9,262.9 519.9,261.6" fill="#bf9e40" stroke="#000" stroke-width="1" /><polygon points="524.9,278.9 530.9,275.4 530.9,259.4 524.9,262.9" fill="#e6c45e" stroke="#000" stroke-width="1" /><polygon points="524.9,262.9 530.9,259.4 525.9,258 519.9,261.6" fill="#f0d67c" stroke="#000" stroke-width="1" /><rect x="528.7" y="267.1" width="2.2" height="2.2" fill="#000"/><rect x="531.2" y="241.9" width="2.4" height="99.5" fill="#d9b650"/><polyline points="531.2,241.9 531.2,341.4" fill="none" stroke="#000" stroke-width="1" /><polyline points="533.6,241.9 533.6,341.4" fill="none" stroke="#6b5a20" stroke-width="0.6" /><polygon points="589.2,295.2 595,291.8 595,276.8 589.2,280.2" fill="#d8b552" stroke="#000" stroke-width="1" /><polygon points="595,291.9 599.5,293.1 599.5,277.1 595,275.9" fill="#bf9e40" stroke="#000" stroke-width="1" /><polygon points="599.5,293.1 605.5,289.5 605.5,273.5 599.5,277.1" fill="#e6c45e" stroke="#000" stroke-width="1" /><polygon points="599.5,277.1 605.5,273.5 601,272.3 595,275.9" fill="#f0d67c" stroke="#000" stroke-width="1" /><rect x="603.3" y="281.3" width="2.2" height="2.2" fill="#000"/><polygon points="570,301.6 575.5,303 575.5,287 570,285.6" fill="url(#gy)" stroke="none" stroke-width="1" /><polygon points="575.5,303 580.5,304.4 580.5,288.4 575.5,287" fill="#bf9e40" stroke="#000" stroke-width="1" /><polygon points="580.5,304.4 586.5,300.8 586.5,284.8 580.5,288.4" fill="#e6c45e" stroke="#000" stroke-width="1" /><polygon points="580.5,288.4 586.5,284.8 581.5,283.5 575.5,287" fill="#f0d67c" stroke="#000" stroke-width="1" /><rect x="584.3" y="292.6" width="2.2" height="2.2" fill="#000"/><polygon points="589.2,236.8 595,233.4 595,218.4 589.2,221.8" fill="#d8b552" stroke="#000" stroke-width="1" /><polygon points="595,233.5 599.5,234.7 599.5,218.7 595,217.5" fill="#bf9e40" stroke="#000" stroke-width="1" /><polygon points="599.5,234.7 605.5,231.1 605.5,215.1 599.5,218.7" fill="#e6c45e" stroke="#000" stroke-width="1" /><polygon points="599.5,218.7 605.5,215.1 601,213.9 595,217.5" fill="#f0d67c" stroke="#000" stroke-width="1" /><rect x="603.3" y="222.9" width="2.2" height="2.2" fill="#000"/><polygon points="570,243.1 575.5,244.6 575.5,228.6 570,227.1" fill="url(#gy)" stroke="none" stroke-width="1" /><polygon points="575.5,244.6 580.5,246 580.5,230 575.5,228.6" fill="#bf9e40" stroke="#000" stroke-width="1" /><polygon points="580.5,246 586.5,242.4 586.5,226.4 580.5,230" fill="#e6c45e" stroke="#000" stroke-width="1" /><polygon points="580.5,230 586.5,226.4 581.5,225.1 575.5,228.6" fill="#f0d67c" stroke="#000" stroke-width="1" /><rect x="584.3" y="234.2" width="2.2" height="2.2" fill="#000"/><rect x="586.8" y="208.8" width="2.4" height="99.3" fill="#d9b650"/><polyline points="586.8,208.8 586.8,308.1" fill="none" stroke="#000" stroke-width="1" /><polyline points="589.2,208.8 589.2,308.1" fill="none" stroke="#6b5a20" stroke-width="0.6" /><polygon points="643.7,262.6 649.5,259.2 649.5,244.2 643.7,247.6" fill="#d8b552" stroke="#000" stroke-width="1" /><polygon points="649.5,259.3 654,260.5 654,244.5 649.5,243.3" fill="#bf9e40" stroke="#000" stroke-width="1" /><polygon points="654,260.5 660,256.9 660,240.9 654,244.5" fill="#e6c45e" stroke="#000" stroke-width="1" /><polygon points="654,244.5 660,240.9 655.5,239.7 649.5,243.3" fill="#f0d67c" stroke="#000" stroke-width="1" /><rect x="657.8" y="248.7" width="2.2" height="2.2" fill="#000"/><polygon points="624.5,269 630,270.5 630,254.5 624.5,253" fill="url(#gy)" stroke="none" stroke-width="1" /><polygon points="630,270.5 635,271.8 635,255.8 630,254.5" fill="#bf9e40" stroke="#000" stroke-width="1" /><polygon points="635,271.8 641,268.2 641,252.2 635,255.8" fill="#e6c45e" stroke="#000" stroke-width="1" /><polygon points="635,255.8 641,252.2 636,250.9 630,254.5" fill="#f0d67c" stroke="#000" stroke-width="1" /><rect x="638.8" y="260" width="2.2" height="2.2" fill="#000"/><polygon points="643.7,204.5 649.5,201.1 649.5,186.1 643.7,189.5" fill="#d8b552" stroke="#000" stroke-width="1" /><polygon points="649.5,201.2 654,202.4 654,186.4 649.5,185.2" fill="#bf9e40" stroke="#000" stroke-width="1" /><polygon points="654,202.4 660,198.8 660,182.8 654,186.4" fill="#e6c45e" stroke="#000" stroke-width="1" /><polygon points="654,186.4 660,182.8 655.5,181.6 649.5,185.2" fill="#f0d67c" stroke="#000" stroke-width="1" /><rect x="657.8" y="190.6" width="2.2" height="2.2" fill="#000"/><polygon points="624.5,210.8 630,212.3 630,196.3 624.5,194.8" fill="url(#gy)" stroke="none" stroke-width="1" /><polygon points="630,212.3 635,213.7 635,197.7 630,196.3" fill="#bf9e40" stroke="#000" stroke-width="1" /><polygon points="635,213.7 641,210.1 641,194.1 635,197.7" fill="#e6c45e" stroke="#000" stroke-width="1" /><polygon points="635,197.7 641,194.1 636,192.8 630,196.3" fill="#f0d67c" stroke="#000" stroke-width="1" /><rect x="638.8" y="201.9" width="2.2" height="2.2" fill="#000"/><rect x="641.3" y="176.4" width="2.4" height="99" fill="#d9b650"/><polyline points="641.3,176.4 641.3,275.4" fill="none" stroke="#000" stroke-width="1" /><polyline points="643.7,176.4 643.7,275.4" fill="none" stroke="#6b5a20" stroke-width="0.6" /><polygon points="679.9,235.8 685.4,237.3 685.4,221.3 679.9,219.8" fill="url(#gy)" stroke="none" stroke-width="1" /><polygon points="685.4,237.3 690.4,238.7 690.4,222.7 685.4,221.3" fill="#bf9e40" stroke="#000" stroke-width="1" /><polygon points="690.4,238.7 696.4,235.1 696.4,219.1 690.4,222.7" fill="#e6c45e" stroke="#000" stroke-width="1" /><polygon points="690.4,222.7 696.4,219.1 691.4,217.8 685.4,221.3" fill="#f0d67c" stroke="#000" stroke-width="1" /><rect x="694.2" y="226.9" width="2.2" height="2.2" fill="#000"/><polygon points="679.9,178 685.4,179.5 685.4,163.5 679.9,162" fill="url(#gy)" stroke="none" stroke-width="1" /><polygon points="685.4,179.5 690.4,180.8 690.4,164.8 685.4,163.5" fill="#bf9e40" stroke="#000" stroke-width="1" /><polygon points="690.4,180.8 696.4,177.3 696.4,161.3 690.4,164.8" fill="#e6c45e" stroke="#000" stroke-width="1" /><polygon points="690.4,164.8 696.4,161.3 691.4,159.9 685.4,163.5" fill="#f0d67c" stroke="#000" stroke-width="1" /><rect x="694.2" y="169" width="2.2" height="2.2" fill="#000"/><rect x="696.7" y="143.5" width="2.4" height="98.7" fill="#d9b650"/><polyline points="696.7,143.5 696.7,242.2" fill="none" stroke="#000" stroke-width="1" /><polyline points="699.1,143.5 699.1,242.2" fill="none" stroke="#6b5a20" stroke-width="0.6" /><polygon points="470,278 713,133.5 713,135.8 470,280.3" fill="#e9c964" stroke="#000" stroke-width="1" /></g><g id="rbeam"><polygon points="694.1,508.2 956.5,352.2 1003.9,348.3 721.5,516.1" fill="#b0b0b0" stroke="none"/><polygon points="694.1,508.2 956.5,352.2 1003.9,348.3 721.5,516.1" fill="url(#np)" stroke="none" opacity="0.6"/><polygon points="694.1,508.2 956.5,352.2 1003.9,348.3 721.5,516.1" fill="none" stroke="#000" stroke-width="1"/><polygon points="721.5,518 1003.9,350.2 1003.9,348.3 721.5,516.1" fill="#c4c4c4" stroke="none"/><polygon points="721.5,518 1003.9,350.2 1003.9,348.3 721.5,516.1" fill="none" stroke="#000" stroke-width="1"/><polygon points="694.1,510.1 721.5,518 721.5,516.1 694.1,508.2" fill="#8a8a8a" stroke="none"/><polygon points="694.1,510.1 721.5,518 721.5,516.1 694.1,508.2" fill="none" stroke="#000" stroke-width="1"/><polygon points="708.3,512.3 980.7,350.4 980.7,314.6 708.3,476.5" fill="#929292" stroke="none"/><polygon points="708.3,512.3 980.7,350.4 980.7,314.6 708.3,476.5" fill="url(#np)" stroke="none" opacity="0.55"/><polygon points="708.3,512.3 980.7,350.4 980.7,314.6 708.3,476.5" fill="none" stroke="#000" stroke-width="1"/><polygon points="707.1,512 708.3,512.3 708.3,476.5 707.1,476.2" fill="#000" stroke="none"/><polygon points="707.1,512 708.3,512.3 708.3,476.5 707.1,476.2" fill="none" stroke="#000" stroke-width="1"/><polygon points="694.1,470.5 956.5,314.5 1003.9,310.6 721.5,478.4" fill="#b4b4b4" stroke="none"/><polygon points="694.1,470.5 956.5,314.5 1003.9,310.6 721.5,478.4" fill="url(#np)" stroke="none" opacity="0.6"/><polygon points="694.1,470.5 956.5,314.5 1003.9,310.6 721.5,478.4" fill="none" stroke="#000" stroke-width="1"/><polygon points="721.5,480.3 1003.9,312.5 1003.9,310.6 721.5,478.4" fill="#c4c4c4" stroke="none"/><polygon points="721.5,480.3 1003.9,312.5 1003.9,310.6 721.5,478.4" fill="none" stroke="#000" stroke-width="1"/><polygon points="694.1,472.4 721.5,480.3 721.5,478.4 694.1,470.5" fill="#8a8a8a" stroke="none"/><polygon points="694.1,472.4 721.5,480.3 721.5,478.4 694.1,470.5" fill="none" stroke="#000" stroke-width="1"/><polyline points="713.2,489.2 733.2,477.3" fill="none" stroke="#f00" stroke-width="1.1" /><rect x="741" y="472" width="2" height="1" fill="#f00"/><polyline points="750.4,467.1 770.4,455.2" fill="none" stroke="#f00" stroke-width="1.1" /><rect x="778" y="450" width="2" height="1" fill="#f00"/><polyline points="787.6,445 807.6,433.1" fill="none" stroke="#f00" stroke-width="1.1" /><rect x="815" y="427" width="2" height="1" fill="#f00"/><polyline points="824.8,422.9 844.8,411" fill="none" stroke="#f00" stroke-width="1.1" /><rect x="852" y="405" width="2" height="1" fill="#f00"/><polyline points="862,400.7 882,388.8" fill="none" stroke="#f00" stroke-width="1.1" /><rect x="890" y="383" width="2" height="1" fill="#f00"/><polyline points="899.2,378.6 919.2,366.7" fill="none" stroke="#f00" stroke-width="1.1" /><rect x="927" y="361" width="2" height="1" fill="#f00"/><polyline points="936.4,356.5 956.4,344.6" fill="none" stroke="#f00" stroke-width="1.1" /><rect x="964" y="339" width="2" height="1" fill="#f00"/><polyline points="973.6,334.4 975,333.6" fill="none" stroke="#f00" stroke-width="1.1" /><polyline points="969,336.5 991,323.5" fill="none" stroke="#f00" stroke-width="1.1" /><polyline points="981,330 992,333.5" fill="none" stroke="#f00" stroke-width="1.1" /></g><g id="rrail"><polygon points="732.6,446.3 779,418.8 779,342.1 732.6,369.6" fill="url(#gl)" stroke="none"/><polyline points="727.8,372.5 774,345" fill="none" stroke="#000" stroke-width="1.2" /><polyline points="749.9,407.9 761.7,381.9" fill="none" stroke="#f00" stroke-width="1" /><polyline points="753.2,395.4 755.2,396.7" fill="none" stroke="#f00" stroke-width="1" /><polyline points="760,398.9 762.5,401.6" fill="none" stroke="#f00" stroke-width="1" /><polygon points="792,411.1 840,382.5 840,305.8 792,334.3" fill="url(#gl)" stroke="none"/><polyline points="787.2,337.2 835,308.8" fill="none" stroke="#000" stroke-width="1.2" /><polyline points="810.1,372.1 821.9,346.1" fill="none" stroke="#f00" stroke-width="1" /><polyline points="813.4,359.6 815.4,360.9" fill="none" stroke="#f00" stroke-width="1" /><polyline points="820.2,363.1 822.7,365.8" fill="none" stroke="#f00" stroke-width="1" /><polygon points="853,374.8 898.5,347.8 898.5,271.1 853,298.1" fill="url(#gl)" stroke="none"/><polyline points="848.2,301 893.5,274.1" fill="none" stroke="#000" stroke-width="1.2" /><polyline points="869.9,336.6 881.6,310.6" fill="none" stroke="#f00" stroke-width="1" /><polyline points="873.1,324.1 875.1,325.4" fill="none" stroke="#f00" stroke-width="1" /><polyline points="880,327.6 882.5,330.3" fill="none" stroke="#f00" stroke-width="1" /><polygon points="911.5,340.1 957.8,312.6 957.8,235.9 911.5,263.4" fill="url(#gl)" stroke="none"/><polyline points="906.7,266.2 952.8,238.9" fill="none" stroke="#000" stroke-width="1.2" /><polyline points="928.7,301.7 940.5,275.7" fill="none" stroke="#f00" stroke-width="1" /><polyline points="932,289.2 934,290.5" fill="none" stroke="#f00" stroke-width="1" /><polyline points="938.8,292.7 941.3,295.4" fill="none" stroke="#f00" stroke-width="1" /><polygon points="727.8,448.9 733.6,445.4 733.6,430.4 727.8,433.9" fill="#d8b552" stroke="#000" stroke-width="1" /><polygon points="733.6,445.5 738.1,446.7 738.1,430.7 733.6,429.5" fill="#bf9e40" stroke="#000" stroke-width="1" /><polygon points="738.1,446.7 744.1,443.2 744.1,427.2 738.1,430.7" fill="#e6c45e" stroke="#000" stroke-width="1" /><polygon points="738.1,430.7 744.1,427.2 739.6,426 733.6,429.5" fill="#f0d67c" stroke="#000" stroke-width="1" /><rect x="741.9" y="434.9" width="2.2" height="2.2" fill="#000"/><polygon points="727.8,390.9 733.6,387.4 733.6,372.4 727.8,375.9" fill="#d8b552" stroke="#000" stroke-width="1" /><polygon points="733.6,387.5 738.1,388.8 738.1,372.8 733.6,371.5" fill="#bf9e40" stroke="#000" stroke-width="1" /><polygon points="738.1,388.8 744.1,385.2 744.1,369.2 738.1,372.8" fill="#e6c45e" stroke="#000" stroke-width="1" /><polygon points="738.1,372.8 744.1,369.2 739.6,368 733.6,371.5" fill="#f0d67c" stroke="#000" stroke-width="1" /><rect x="741.9" y="377" width="2.2" height="2.2" fill="#000"/><rect x="725.4" y="363.7" width="2.4" height="98.1" fill="#d9b650"/><polyline points="725.4,363.7 725.4,461.8" fill="none" stroke="#000" stroke-width="1" /><polyline points="727.8,363.7 727.8,461.8" fill="none" stroke="#6b5a20" stroke-width="0.6" /><polygon points="787.2,413.6 793,410.2 793,395.2 787.2,398.6" fill="#d8b552" stroke="#000" stroke-width="1" /><polygon points="793,410.3 797.5,411.5 797.5,395.5 793,394.3" fill="#bf9e40" stroke="#000" stroke-width="1" /><polygon points="797.5,411.5 803.5,408 803.5,392 797.5,395.5" fill="#e6c45e" stroke="#000" stroke-width="1" /><polygon points="797.5,395.5 803.5,392 799,390.7 793,394.3" fill="#f0d67c" stroke="#000" stroke-width="1" /><rect x="801.3" y="399.7" width="2.2" height="2.2" fill="#000"/><polygon points="768,420 773.5,421.5 773.5,405.5 768,404" fill="url(#gy)" stroke="none" stroke-width="1" /><polygon points="773.5,421.5 778.5,422.8 778.5,406.8 773.5,405.5" fill="#bf9e40" stroke="#000" stroke-width="1" /><polygon points="778.5,422.8 784.5,419.2 784.5,403.2 778.5,406.8" fill="#e6c45e" stroke="#000" stroke-width="1" /><polygon points="778.5,406.8 784.5,403.2 779.5,401.9 773.5,405.5" fill="#f0d67c" stroke="#000" stroke-width="1" /><rect x="782.3" y="411" width="2.2" height="2.2" fill="#000"/><polygon points="787.2,355.8 793,352.3 793,337.3 787.2,340.8" fill="#d8b552" stroke="#000" stroke-width="1" /><polygon points="793,352.5 797.5,353.7 797.5,337.7 793,336.5" fill="#bf9e40" stroke="#000" stroke-width="1" /><polygon points="797.5,353.7 803.5,350.1 803.5,334.1 797.5,337.7" fill="#e6c45e" stroke="#000" stroke-width="1" /><polygon points="797.5,337.7 803.5,334.1 799,332.9 793,336.5" fill="#f0d67c" stroke="#000" stroke-width="1" /><rect x="801.3" y="341.9" width="2.2" height="2.2" fill="#000"/><polygon points="768,362.1 773.5,363.6 773.5,347.6 768,346.1" fill="url(#gy)" stroke="none" stroke-width="1" /><polygon points="773.5,363.6 778.5,365 778.5,349 773.5,347.6" fill="#bf9e40" stroke="#000" stroke-width="1" /><polygon points="778.5,365 784.5,361.4 784.5,345.4 778.5,349" fill="#e6c45e" stroke="#000" stroke-width="1" /><polygon points="778.5,349 784.5,345.4 779.5,344 773.5,347.6" fill="#f0d67c" stroke="#000" stroke-width="1" /><rect x="782.3" y="353.2" width="2.2" height="2.2" fill="#000"/><rect x="784.8" y="328.4" width="2.4" height="98.1" fill="#d9b650"/><polyline points="784.8,328.4 784.8,426.5" fill="none" stroke="#000" stroke-width="1" /><polyline points="787.2,328.4 787.2,426.5" fill="none" stroke="#6b5a20" stroke-width="0.6" /><polygon points="848.2,377.5 854,374 854,359 848.2,362.5" fill="#d8b552" stroke="#000" stroke-width="1" /><polygon points="854,374.1 858.5,375.4 858.5,359.4 854,358.1" fill="#bf9e40" stroke="#000" stroke-width="1" /><polygon points="858.5,375.4 864.5,371.8 864.5,355.8 858.5,359.4" fill="#e6c45e" stroke="#000" stroke-width="1" /><polygon points="858.5,359.4 864.5,355.8 860,354.6 854,358.1" fill="#f0d67c" stroke="#000" stroke-width="1" /><rect x="862.3" y="363.6" width="2.2" height="2.2" fill="#000"/><polygon points="829,383.8 834.5,385.3 834.5,369.3 829,367.8" fill="url(#gy)" stroke="none" stroke-width="1" /><polygon points="834.5,385.3 839.5,386.6 839.5,370.6 834.5,369.3" fill="#bf9e40" stroke="#000" stroke-width="1" /><polygon points="839.5,386.6 845.5,383.1 845.5,367.1 839.5,370.6" fill="#e6c45e" stroke="#000" stroke-width="1" /><polygon points="839.5,370.6 845.5,367.1 840.5,365.7 834.5,369.3" fill="#f0d67c" stroke="#000" stroke-width="1" /><rect x="843.3" y="374.9" width="2.2" height="2.2" fill="#000"/><polygon points="848.2,319.8 854,316.3 854,301.3 848.2,304.8" fill="#d8b552" stroke="#000" stroke-width="1" /><polygon points="854,316.4 858.5,317.6 858.5,301.6 854,300.4" fill="#bf9e40" stroke="#000" stroke-width="1" /><polygon points="858.5,317.6 864.5,314.1 864.5,298.1 858.5,301.6" fill="#e6c45e" stroke="#000" stroke-width="1" /><polygon points="858.5,301.6 864.5,298.1 860,296.9 854,300.4" fill="#f0d67c" stroke="#000" stroke-width="1" /><rect x="862.3" y="305.8" width="2.2" height="2.2" fill="#000"/><polygon points="829,326.1 834.5,327.6 834.5,311.6 829,310.1" fill="url(#gy)" stroke="none" stroke-width="1" /><polygon points="834.5,327.6 839.5,328.9 839.5,312.9 834.5,311.6" fill="#bf9e40" stroke="#000" stroke-width="1" /><polygon points="839.5,328.9 845.5,325.4 845.5,309.4 839.5,312.9" fill="#e6c45e" stroke="#000" stroke-width="1" /><polygon points="839.5,312.9 845.5,309.4 840.5,308 834.5,311.6" fill="#f0d67c" stroke="#000" stroke-width="1" /><rect x="843.3" y="317.1" width="2.2" height="2.2" fill="#000"/><rect x="845.8" y="292.2" width="2.4" height="98.1" fill="#d9b650"/><polyline points="845.8,292.2 845.8,390.3" fill="none" stroke="#000" stroke-width="1" /><polyline points="848.2,292.2 848.2,390.3" fill="none" stroke="#6b5a20" stroke-width="0.6" /><polygon points="906.7,342.8 912.5,339.3 912.5,324.3 906.7,327.8" fill="#d8b552" stroke="#000" stroke-width="1" /><polygon points="912.5,339.5 917,340.7 917,324.7 912.5,323.5" fill="#bf9e40" stroke="#000" stroke-width="1" /><polygon points="917,340.7 923,337.1 923,321.1 917,324.7" fill="#e6c45e" stroke="#000" stroke-width="1" /><polygon points="917,324.7 923,321.1 918.5,319.9 912.5,323.5" fill="#f0d67c" stroke="#000" stroke-width="1" /><rect x="920.8" y="328.9" width="2.2" height="2.2" fill="#000"/><polygon points="887.5,349.1 893,350.6 893,334.6 887.5,333.1" fill="url(#gy)" stroke="none" stroke-width="1" /><polygon points="893,350.6 898,352 898,336 893,334.6" fill="#bf9e40" stroke="#000" stroke-width="1" /><polygon points="898,352 904,348.4 904,332.4 898,336" fill="#e6c45e" stroke="#000" stroke-width="1" /><polygon points="898,336 904,332.4 899,331 893,334.6" fill="#f0d67c" stroke="#000" stroke-width="1" /><rect x="901.8" y="340.2" width="2.2" height="2.2" fill="#000"/><polygon points="906.7,285.2 912.5,281.8 912.5,266.8 906.7,270.2" fill="#d8b552" stroke="#000" stroke-width="1" /><polygon points="912.5,281.9 917,283.1 917,267.1 912.5,265.9" fill="#bf9e40" stroke="#000" stroke-width="1" /><polygon points="917,283.1 923,279.5 923,263.5 917,267.1" fill="#e6c45e" stroke="#000" stroke-width="1" /><polygon points="917,267.1 923,263.5 918.5,262.3 912.5,265.9" fill="#f0d67c" stroke="#000" stroke-width="1" /><rect x="920.8" y="271.3" width="2.2" height="2.2" fill="#000"/><polygon points="887.5,291.5 893,293 893,277 887.5,275.5" fill="url(#gy)" stroke="none" stroke-width="1" /><polygon points="893,293 898,294.4 898,278.4 893,277" fill="#bf9e40" stroke="#000" stroke-width="1" /><polygon points="898,294.4 904,290.8 904,274.8 898,278.4" fill="#e6c45e" stroke="#000" stroke-width="1" /><polygon points="898,278.4 904,274.8 899,273.5 893,277" fill="#f0d67c" stroke="#000" stroke-width="1" /><rect x="901.8" y="282.6" width="2.2" height="2.2" fill="#000"/><rect x="904.3" y="257.4" width="2.4" height="98.1" fill="#d9b650"/><polyline points="904.3,257.4 904.3,355.5" fill="none" stroke="#000" stroke-width="1" /><polyline points="906.7,257.4 906.7,355.5" fill="none" stroke="#6b5a20" stroke-width="0.6" /><polygon points="946.8,314 952.2,315.5 952.2,299.5 946.8,298" fill="url(#gy)" stroke="none" stroke-width="1" /><polygon points="952.2,315.5 957.2,316.8 957.2,300.8 952.2,299.5" fill="#bf9e40" stroke="#000" stroke-width="1" /><polygon points="957.2,316.8 963.2,313.3 963.2,297.3 957.2,300.8" fill="#e6c45e" stroke="#000" stroke-width="1" /><polygon points="957.2,300.8 963.2,297.3 958.2,295.9 952.2,299.5" fill="#f0d67c" stroke="#000" stroke-width="1" /><rect x="961.1" y="305" width="2.2" height="2.2" fill="#000"/><polygon points="946.8,256.5 952.2,258 952.2,242 946.8,240.5" fill="url(#gy)" stroke="none" stroke-width="1" /><polygon points="952.2,258 957.2,259.4 957.2,243.4 952.2,242" fill="#bf9e40" stroke="#000" stroke-width="1" /><polygon points="957.2,259.4 963.2,255.8 963.2,239.8 957.2,243.4" fill="#e6c45e" stroke="#000" stroke-width="1" /><polygon points="957.2,243.4 963.2,239.8 958.2,238.5 952.2,242" fill="#f0d67c" stroke="#000" stroke-width="1" /><rect x="961.1" y="247.6" width="2.2" height="2.2" fill="#000"/><rect x="963.5" y="222.2" width="2.4" height="98.1" fill="#d9b650"/><polyline points="963.5,222.2 963.5,320.3" fill="none" stroke="#000" stroke-width="1" /><polyline points="966,222.2 966,320.3" fill="none" stroke="#6b5a20" stroke-width="0.6" /><polygon points="734.8,442.4 993.4,287.6 988.8,289.3 728,440.4" fill="#f0d67c" stroke="#000" stroke-width="1" /><polygon points="734.8,461.8 993.4,308.4 993.4,287.6 734.8,442.4" fill="url(#ty)" stroke="#000"/><polygon points="728,461.2 734.8,461.8 734.8,442.4 728,440.4" fill="#bf9e40" stroke="#000" stroke-width="1" /><polygon points="719,367.2 981.5,211.3 981.5,213.6 719,369.5" fill="#e9c964" stroke="#000" stroke-width="1" /></g></g></svg></body></html>
